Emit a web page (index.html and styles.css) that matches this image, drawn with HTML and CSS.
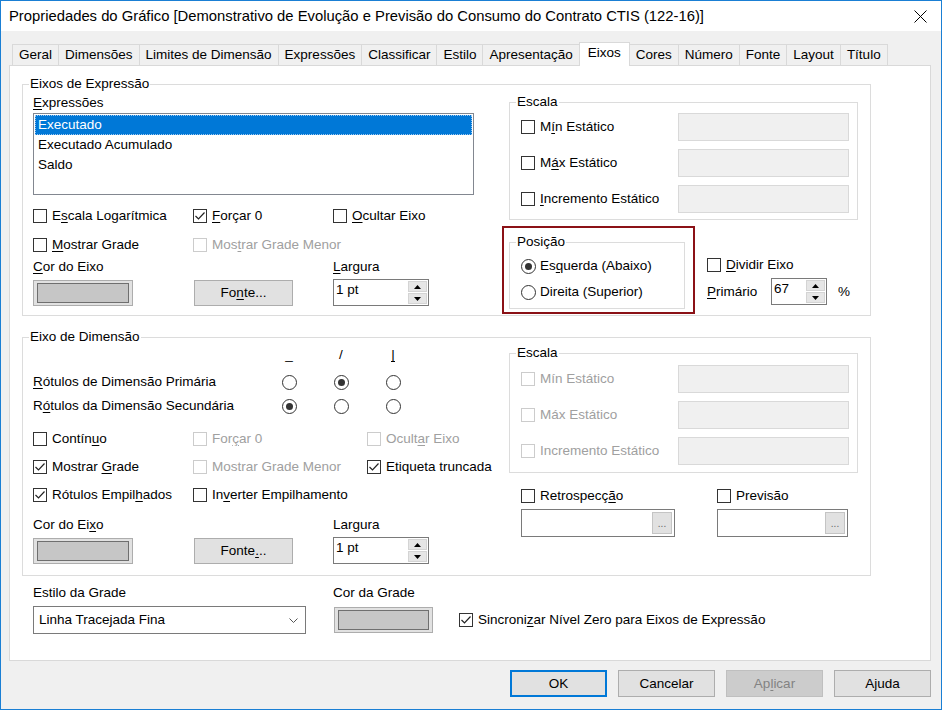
FILE: index.html
```html
<!DOCTYPE html>
<html lang="pt">
<head>
<meta charset="utf-8">
<title>Propriedades do Gráfico</title>
<link rel="stylesheet" href="styles.css">
</head>
<body>
<div class="window">
  <div class="titlebar">
    <span class="title">Propriedades do Gráfico [Demonstrativo de Evolução e Previsão do Consumo do Contrato CTIS (122-16)]</span>
    <svg class="close" width="13" height="13" viewBox="0 0 13 13"><path d="M0.5 0.5 L12.5 12.5 M12.5 0.5 L0.5 12.5" stroke="#000" stroke-width="1" fill="none"/></svg>
  </div>
  <div class="client">
    <div class="tabs">
      <div class="tab">Geral</div>
      <div class="tab">Dimensões</div>
      <div class="tab">Limites de Dimensão</div>
      <div class="tab">Expressões</div>
      <div class="tab">Classificar</div>
      <div class="tab">Estilo</div>
      <div class="tab">Apresentação</div>
      <div class="tab active">Eixos</div>
      <div class="tab">Cores</div>
      <div class="tab">Número</div>
      <div class="tab">Fonte</div>
      <div class="tab">Layout</div>
      <div class="tab">Título</div>
    </div>
    <div class="panel">
      <!-- Eixos de Expressão -->
      <div class="group g1">
        <span class="legend">Eixos de Expressão</span>
        <div class="g1-left">
          <div class="label"><u>E</u>xpressões</div>
          <div class="listbox">
            <div class="item selected">Executado</div>
            <div class="item">Executado Acumulado</div>
            <div class="item">Saldo</div>
          </div>
          <div class="opts opts-g1">
            <label class="chk"><span class="box"></span><span>E<u>s</u>cala Logarítmica</span></label>
            <label class="chk"><span class="box"><svg width="12" height="12" viewBox="0 0 12 12"><path d="M1.5 6 L4.5 9 L10.5 2.5" fill="none" stroke="#222" stroke-width="1.2"/></svg></span><span><u>F</u>orçar 0</span></label>
            <label class="chk"><span class="box"></span><span><u>O</u>cultar Eixo</span></label>
            <label class="chk"><span class="box"></span><span><u>M</u>ostrar Grade</span></label>
            <label class="chk disabled"><span class="box"></span><span>Mos<u>t</u>rar Grade Menor</span></label>
            <span></span>
          </div>
          <div class="ctrl-grid">
            <div class="label"><u>C</u>or do Eixo</div>
            <div></div>
            <div class="label"><u>L</u>argura</div>
            <div class="colorbtn"><span class="swatch"></span></div>
            <div class="btn fontbtn">Fo<u>n</u>te...</div>
            <div class="spin spin-w">
              <span class="spin-val">1 pt</span>
              <span class="spin-btns">
                <span class="sb"><svg width="7" height="4" viewBox="0 0 7 4"><path d="M0 4 L3.5 0 L7 4Z" fill="#000"/></svg></span>
                <span class="sb"><svg width="7" height="4" viewBox="0 0 7 4"><path d="M0 0 L3.5 4 L7 0Z" fill="#000"/></svg></span>
              </span>
            </div>
          </div>
        </div>
        <div class="g1-right">
          <div class="group escala">
            <span class="legend">Escala</span>
            <div class="scale-row"><label class="chk"><span class="box"></span><span>M<u>í</u>n Estático</span></label><span class="field"></span></div>
            <div class="scale-row"><label class="chk"><span class="box"></span><span>M<u>á</u>x Estático</span></label><span class="field"></span></div>
            <div class="scale-row"><label class="chk"><span class="box"></span><span><u>I</u>ncremento Estático</span></label><span class="field"></span></div>
          </div>
          <div class="pos-row">
            <div class="highlight">
              <div class="group posgroup">
                <span class="legend">Posição</span>
                <label class="radio-row"><span class="radio on"></span><span>Es<u>q</u>uerda (Abaixo)</span></label>
                <label class="radio-row"><span class="radio"></span><span>Direita (Superior)</span></label>
              </div>
            </div>
            <div class="split">
              <label class="chk split-row"><span class="box"></span><span><u>D</u>ividir Eixo</span></label>
              <div class="prim-row">
                <span class="prim-label"><u>P</u>rimário</span>
                <div class="spin spin-s">
                  <span class="spin-val">67</span>
                  <span class="spin-btns">
                    <span class="sb"><svg width="7" height="4" viewBox="0 0 7 4"><path d="M0 4 L3.5 0 L7 4Z" fill="#000"/></svg></span>
                    <span class="sb"><svg width="7" height="4" viewBox="0 0 7 4"><path d="M0 0 L3.5 4 L7 0Z" fill="#000"/></svg></span>
                  </span>
                </div>
                <span class="pct">%</span>
              </div>
            </div>
          </div>
        </div>
      </div>

      <!-- Eixo de Dimensão -->
      <div class="group g2">
        <span class="legend">Eixo de Dimensão</span>
        <div class="g2-left">
          <div class="dimgrid">
            <span></span>
            <span class="hdr">_</span>
            <span class="hdr">/</span>
            <span class="hdr hdr-v">|</span>
            <span class="dimlabel"><u>R</u>ótulos de Dimensão Primária</span>
            <span class="radio"></span>
            <span class="radio on"></span>
            <span class="radio"></span>
            <span class="dimlabel">R<u>ó</u>tulos da Dimensão Secundária</span>
            <span class="radio on"></span>
            <span class="radio"></span>
            <span class="radio"></span>
          </div>
          <div class="opts opts-g2">
            <label class="chk"><span class="box"></span><span>Contín<u>u</u>o</span></label>
            <label class="chk disabled"><span class="box"></span><span>For<u>ç</u>ar 0</span></label>
            <label class="chk disabled"><span class="box"></span><span>Ocult<u>a</u>r Eixo</span></label>
            <label class="chk"><span class="box"><svg width="12" height="12" viewBox="0 0 12 12"><path d="M1.5 6 L4.5 9 L10.5 2.5" fill="none" stroke="#222" stroke-width="1.2"/></svg></span><span>Mostrar <u>G</u>rade</span></label>
            <label class="chk disabled"><span class="box"></span><span>Mostrar Grade Menor</span></label>
            <label class="chk"><span class="box"><svg width="12" height="12" viewBox="0 0 12 12"><path d="M1.5 6 L4.5 9 L10.5 2.5" fill="none" stroke="#222" stroke-width="1.2"/></svg></span><span>Etiqueta truncada</span></label>
            <label class="chk"><span class="box"><svg width="12" height="12" viewBox="0 0 12 12"><path d="M1.5 6 L4.5 9 L10.5 2.5" fill="none" stroke="#222" stroke-width="1.2"/></svg></span><span>Rótulos Empil<u>h</u>ados</span></label>
            <label class="chk"><span class="box"></span><span>In<u>v</u>erter Empilhamento</span></label>
            <span></span>
          </div>
          <div class="ctrl-grid ctrl-g2">
            <div class="label">Cor do Ei<u>x</u>o</div>
            <div></div>
            <div class="label">Largura</div>
            <div class="colorbtn"><span class="swatch"></span></div>
            <div class="btn fontbtn">Fonte<u>.</u>..</div>
            <div class="spin spin-w">
              <span class="spin-val">1 pt</span>
              <span class="spin-btns">
                <span class="sb"><svg width="7" height="4" viewBox="0 0 7 4"><path d="M0 4 L3.5 0 L7 4Z" fill="#000"/></svg></span>
                <span class="sb"><svg width="7" height="4" viewBox="0 0 7 4"><path d="M0 0 L3.5 4 L7 0Z" fill="#000"/></svg></span>
              </span>
            </div>
          </div>
        </div>
        <div class="g2-right">
          <div class="group escala escala2">
            <span class="legend">Escala</span>
            <div class="scale-row"><label class="chk disabled"><span class="box"></span><span>Mín Estático</span></label><span class="field"></span></div>
            <div class="scale-row"><label class="chk disabled"><span class="box"></span><span>Máx Estático</span></label><span class="field"></span></div>
            <div class="scale-row"><label class="chk disabled"><span class="box"></span><span>Incremento Estático</span></label><span class="field"></span></div>
          </div>
          <div class="retro-row">
            <label class="chk retro-a"><span class="box"></span><span>Retrospecç<u>ã</u>o</span></label>
            <label class="chk"><span class="box"></span><span>Previsão</span></label>
          </div>
          <div class="dots-row">
            <div class="dotsfield dots-a"><span class="dotsbtn">...</span></div>
            <div class="dotsfield dots-b"><span class="dotsbtn">...</span></div>
          </div>
        </div>
      </div>

      <div class="bottom">
        <div class="label">Estilo da Grade</div>
        <div class="label">Cor da Grade</div>
        <div></div>
        <div class="combo"><span>Linha Tracejada Fina</span><svg width="9" height="5" viewBox="0 0 9 5"><path d="M0.5 0.5 L4.5 4.5 L8.5 0.5" fill="none" stroke="#555" stroke-width="1"/></svg></div>
        <div class="colorbtn grid-color"><span class="swatch"></span></div>
        <label class="chk"><span class="box"><svg width="12" height="12" viewBox="0 0 12 12"><path d="M1.5 6 L4.5 9 L10.5 2.5" fill="none" stroke="#222" stroke-width="1.2"/></svg></span><span>Sincroni<u>z</u>ar Nível Zero para Eixos de Expressão</span></label>
      </div>
    </div>
    <div class="footer">
      <div class="btn dlg default">OK</div>
      <div class="btn dlg">Cancelar</div>
      <div class="btn dlg disabled">Ap<u>l</u>icar</div>
      <div class="btn dlg">Ajuda</div>
    </div>
  </div>
</div>
</body>
</html>
```

FILE: styles.css
```css
* { box-sizing: border-box; }
html, body { margin: 0; padding: 0; background: #fff; }
body {
  font-family: "Liberation Sans", Arial, sans-serif;
  font-size: 13.5px;
  line-height: 16px;
  color: #000;
}
u { text-decoration: underline; text-underline-offset: 2px; }

.window {
  width: 942px;
  height: 710px;
  border: 1px solid #1a7fd4;
  background: #f0f0f0;
  display: flex;
  flex-direction: column;
  overflow: hidden;
}

.titlebar {
  height: 30px;
  flex: none;
  background: #fff;
  display: flex;
  align-items: center;
  justify-content: space-between;
  padding: 0 14px 0 8px;
}
.title { font-size: 14.8px; line-height: 18px; white-space: nowrap; }
.close { display: block; }

.client {
  flex: 1;
  padding: 11px 10px 0 8px;
  display: flex;
  flex-direction: column;
}

.tabs {
  display: flex;
  align-items: flex-end;
  height: 23px;
  padding-left: 3px;
  position: relative;
  z-index: 1;
}
.tab {
  height: 21px;
  line-height: 19px;
  padding: 0 6px;
  border: 1px solid #d9d9d9;
  border-bottom: none;
  background: #f0f0f0;
  margin-right: -1px;
  white-space: nowrap;
}
.tab.active {
  height: 24px;
  line-height: 20px;
  background: #fff;
  margin-bottom: -1px;
  padding: 0 8px;
  position: relative;
}

.panel {
  height: 596px;
  flex: none;
  background: #fff;
  border: 1px solid #d9d9d9;
  padding: 18px 0 0 12px;
}

.group {
  position: relative;
  border: 1px solid #dcdcdc;
}
.legend {
  position: absolute;
  top: -9px;
  left: 6px;
  background: #fff;
  padding: 0 1px;
  line-height: 16px;
  white-space: nowrap;
}

.label { height: 16px; white-space: nowrap; }

/* group 1 */
.g1 {
  width: 849px;
  display: flex;
  gap: 28px;
  padding: 10px 12px 1px 10px;
}
.g1-left { width: 441px; flex: none; }
.g1-right { width: 356px; flex: none; }

.listbox {
  margin-top: 2px;
  height: 82px;
  border: 1px solid #828790;
  padding: 1px;
  background: #fff;
}
.item { height: 20px; line-height: 20px; padding-left: 3px; white-space: nowrap; }
.item.selected {
  background: #0078d7;
  color: #fff;
  outline: 1px dotted #9cc8f0;
  outline-offset: -1px;
}

.opts { display: grid; margin-top: 6px; }
.opts-g1 { grid-template-columns: 160px 140px 1fr; grid-auto-rows: 29px; }
.opts-g2 { grid-template-columns: 160px 174px 1fr; grid-auto-rows: 28px; margin-top: 7px; }

.chk {
  display: flex;
  align-items: center;
  gap: 5px;
  white-space: nowrap;
}
.box {
  width: 14px;
  height: 14px;
  border: 1px solid #333;
  background: #fff;
  flex: none;
  display: flex;
  align-items: center;
  justify-content: center;
}
.chk.disabled { color: #a0a0a0; }
.chk.disabled .box { border-color: #cccccc; }

.ctrl-grid {
  display: grid;
  grid-template-columns: 160px 140px 1fr;
  grid-template-rows: 16px 26px;
  row-gap: 5px;
}
.ctrl-g2 { margin-top: 8px; }

.colorbtn {
  width: 100px;
  height: 26px;
  border: 1px solid #adadad;
  background: #e1e1e1;
  padding: 2px 3px;
  display: flex;
}
.swatch {
  flex: 1;
  border: 1px solid #6f6f6f;
  background: #c6c6c6;
}

.btn {
  height: 26px;
  border: 1px solid #adadad;
  background: #e1e1e1;
  display: flex;
  align-items: center;
  justify-content: center;
  white-space: nowrap;
}
.fontbtn { width: 99px; margin-left: 1px; }

.spin {
  height: 27px;
  margin-top: -1px;
  border: 1px solid #7a7a7a;
  background: #fff;
  display: flex;
}
.spin-w { width: 96px; }
.spin-s { width: 56px; }
.spin-val { flex: 1; padding: 2px 0 0 2px; }
.spin-btns {
  width: 21px;
  display: flex;
  flex-direction: column;
  padding: 1px;
  gap: 1px;
}
.sb {
  flex: 1;
  background: #e6e6e6;
  border: 1px solid #d4d4d4;
  display: flex;
  align-items: center;
  justify-content: center;
}

/* escala */
.escala {
  margin-left: 7px;
  margin-top: 7px;
  width: 349px;
  height: 118px;
  padding: 6px 8px 2px 11px;
}
.scale-row {
  height: 36px;
  display: flex;
  align-items: center;
  justify-content: space-between;
}
.field {
  width: 171px;
  height: 28px;
  background: #f0f0f0;
  border: 1px solid #d9d9d9;
}

.pos-row { display: flex; margin-top: 6px; }
.highlight {
  width: 193px;
  height: 88px;
  border: 2px solid #8b1116;
  padding: 14px 7px 3px 5px;
}
.posgroup {
  width: 176px;
  height: 67px;
  padding: 10px 0 3px 11px;
}
.radio-row {
  height: 26px;
  display: flex;
  align-items: center;
  gap: 4px;
  white-space: nowrap;
}
.radio {
  width: 15px;
  height: 15px;
  border-radius: 50%;
  border: 1px solid #333;
  background: #fff;
  display: flex;
  align-items: center;
  justify-content: center;
  flex: none;
}
.radio.on::after {
  content: "";
  width: 7px;
  height: 7px;
  border-radius: 50%;
  background: #333;
}

.split { margin-left: 12px; padding-top: 28px; }
.split-row { height: 22px; }
.prim-row {
  margin-top: 2px;
  display: flex;
  align-items: center;
  height: 27px;
}
.prim-label { width: 64px; }
.spin-s { margin-top: 0; }
.pct { margin-left: 11px; }

/* group 2 */
.g2 {
  width: 849px;
  margin-top: 21px;
  display: flex;
  gap: 10px;
  padding: 7px 12px 11px 10px;
}
.g2-left { width: 466px; flex: none; }
.g2-right { width: 349px; flex: none; }

.dimgrid {
  display: grid;
  grid-template-columns: 230px 52px 52px 52px;
  grid-template-rows: 25px 24px 24px;
  align-items: center;
}
.hdr { align-self: start; padding-top: 2px; justify-self: center; color: #000; }
.hdr-v { border-bottom: 1px solid #000; line-height: 13px; padding-top: 3px; }
.dimgrid .radio { justify-self: center; }
.dimlabel { white-space: nowrap; }

.escala2 { margin-left: 0; margin-top: 8px; height: 120px; padding: 7px 8px 3px 11px; }

.retro-row {
  display: flex;
  align-items: center;
  height: 22px;
  margin-top: 12px;
  padding-left: 12px;
}
.retro-a { width: 196px; }
.dots-row {
  display: flex;
  margin-top: 2px;
  padding-left: 12px;
  gap: 42px;
}
.dotsfield {
  height: 28px;
  border: 1px solid #7a7a7a;
  background: #fff;
  display: flex;
  justify-content: flex-end;
  align-items: center;
  padding-right: 2px;
}
.dots-a { width: 154px; }
.dots-b { width: 131px; }
.dotsbtn {
  width: 20px;
  height: 22px;
  background: #e1e1e1;
  border: 1px solid #c4c4c4;
  color: #666;
  font-size: 10px;
  line-height: 22px;
  text-align: center;
}

/* bottom */
.bottom {
  margin-left: 11px;
  margin-top: 9px;
  display: grid;
  grid-template-columns: 300px 126px auto;
  grid-template-rows: 16px 28px;
  row-gap: 5px;
  align-items: center;
}
.combo {
  width: 273px;
  height: 28px;
  border: 1px solid #7a7a7a;
  background: #fff;
  display: flex;
  align-items: center;
  justify-content: space-between;
  padding: 0 7px 0 5px;
}
.grid-color { margin-left: 1px; width: 99px; }

.footer {
  display: flex;
  justify-content: flex-end;
  gap: 11px;
  margin-top: 9px;
}
.dlg { width: 97px; height: 27px; }
.dlg.default { border: 2px solid #0078d7; }
.dlg.disabled { background: #cccccc; border-color: #bfbfbf; color: #838383; }
```
